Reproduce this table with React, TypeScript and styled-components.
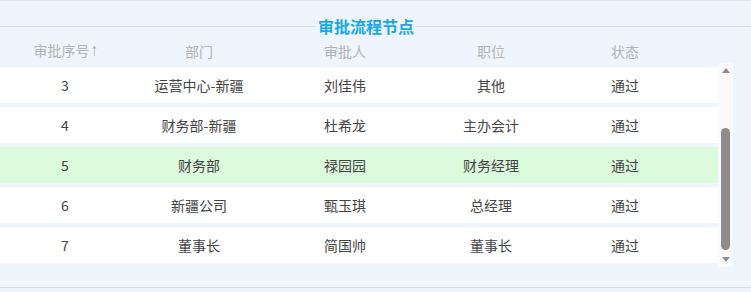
import React from "react";
import styled, { createGlobalStyle } from "styled-components";

const GlobalStyle = createGlobalStyle`
  html, body { margin: 0; padding: 0; background: #eef5fc; }
  body { font-family: "Noto Sans CJK SC", "Noto Sans", sans-serif; }
`;

const Page = styled.div`
  width: 751px;
  height: 292px;
  box-sizing: border-box;
  border-top: 1px solid #e3e3e3;
  background: #eef5fc;
  display: flex;
  flex-direction: column;
  overflow: hidden;
`;

const TitleRow = styled.div`
  margin-top: 14px;
  height: 22px;
  display: flex;
  align-items: center;
`;

const Rule = styled.div<{ $fixed?: number }>`
  height: 1px;
  background: #d9dde2;
  ${(p) => (p.$fixed ? `width: ${p.$fixed}px;` : "flex: 1;")}
`;

const Title = styled.div`
  padding: 0 2px;
  font-size: 16px;
  line-height: 22px;
  font-weight: 700;
  color: #12a9f2;
`;

const Columns = styled.div`
  display: grid;
  grid-template-columns: 130px 138px 154px 138px 130px;
`;

const HeaderRow = styled(Columns)`
  height: 26px;
  align-items: center;
`;

const HeaderCell = styled.div`
  text-align: center;
  font-size: 14px;
  color: #b3b3b3;
  line-height: 26px;
`;

const SortMark = styled.span`
  display: inline-block;
  font-family: "DejaVu Sans", sans-serif;
  font-size: 14px;
  width: 6px;
  transform: scaleX(0.6);
  transform-origin: left center;
  margin-left: 1px;
`;

const BodyArea = styled.div`
  height: 204px;
  width: 733px;
  display: flex;
`;

const RowList = styled.div`
  width: 718px;
  padding-top: 4px;
  overflow: hidden;
  box-sizing: border-box;
`;

const Row = styled(Columns)<{ $highlight?: boolean }>`
  height: 36px;
  margin-bottom: 4px;
  align-items: center;
  background: ${(p) => (p.$highlight ? "#dcfadc" : "#ffffff")};
`;

const Cell = styled.div`
  text-align: center;
  font-size: 14px;
  color: #444;
  line-height: 36px;
`;

const ScrollBar = styled.div`
  width: 15px;
  background: #fafafa;
  display: flex;
  flex-direction: column;
  align-items: center;
`;

const Arrow = styled.div<{ $down?: boolean }>`
  height: 15px;
  width: 15px;
  display: flex;
  align-items: center;
  justify-content: center;
  &::before {
    content: "";
    width: 0;
    height: 0;
    border-left: 4px solid transparent;
    border-right: 4px solid transparent;
    ${(p) =>
      p.$down
        ? "border-top: 5px solid #8c8c8c;"
        : "border-bottom: 5px solid #8c8c8c;"}
  }
`;

const Track = styled.div`
  flex: 1;
  width: 15px;
  display: flex;
  justify-content: center;
`;

const Thumb = styled.div`
  margin-top: 50px;
  width: 9px;
  height: 122px;
  border-radius: 5px;
  background: #8c8c8c;
`;

const Bottom = styled.div`
  height: 20px;
  width: 751px;
  border-bottom: 1px solid #dcdcdc;
`;

const headers = ["审批序号", "部门", "审批人", "职位", "状态"];

const rows = [
  { no: "3", dept: "运营中心-新疆", person: "刘佳伟", pos: "其他", status: "通过" },
  { no: "4", dept: "财务部-新疆", person: "杜希龙", pos: "主办会计", status: "通过" },
  { no: "5", dept: "财务部", person: "禄园园", pos: "财务经理", status: "通过", hl: true },
  { no: "6", dept: "新疆公司", person: "甄玉琪", pos: "总经理", status: "通过" },
  { no: "7", dept: "董事长", person: "简国帅", pos: "董事长", status: "通过" },
];

export default function App() {
  return (
    <>
      <GlobalStyle />
      <Page>
        <TitleRow>
          <Rule $fixed={316} />
          <Title>审批流程节点</Title>
          <Rule />
        </TitleRow>
        <HeaderRow>
          {headers.map((h, i) => (
            <HeaderCell key={h}>
              {h}
              {i === 0 && <SortMark>↑</SortMark>}
            </HeaderCell>
          ))}
        </HeaderRow>
        <BodyArea>
          <RowList>
            {rows.map((r) => (
              <Row key={r.no} $highlight={r.hl}>
                <Cell>{r.no}</Cell>
                <Cell>{r.dept}</Cell>
                <Cell>{r.person}</Cell>
                <Cell>{r.pos}</Cell>
                <Cell>{r.status}</Cell>
              </Row>
            ))}
          </RowList>
          <ScrollBar>
            <Arrow />
            <Track>
              <Thumb />
            </Track>
            <Arrow $down />
          </ScrollBar>
        </BodyArea>
        <Bottom />
      </Page>
    </>
  );
}
